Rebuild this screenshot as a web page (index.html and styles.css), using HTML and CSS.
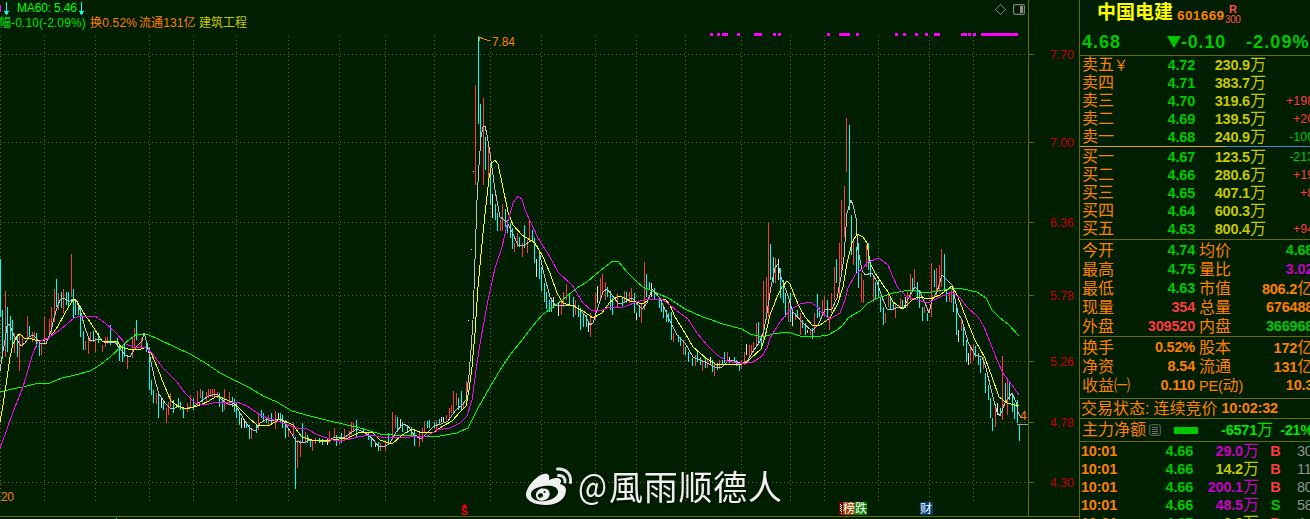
FILE: index.html
```html
<!DOCTYPE html>
<html lang="zh-CN">
<head>
    <meta charset="UTF-8">
    <meta name="viewport" content="width=device-width, initial-scale=1.0">
    <title>中国电建 601669</title>
    <link rel="stylesheet" href="styles.css">
</head>
<body>
    <div class="terminal">
        <main class="chart">
            <div class="chart-info">
                <div class="info-row ma-row">
                    <i class="ma-tail"></i>
                    <svg class="arrow" viewBox="0 0 5 13"><path d="M2 0h1v9h2v1H4v2H3v1H2v-1H1v-2H0V9h2z"/></svg>
                    <span class="ma60">MA60: 5.46</span>
                    <svg class="arrow" viewBox="0 0 5 13"><path d="M2 0h1v9h2v1H4v2H3v1H2v-1H1v-2H0V9h2z"/></svg>
                </div>
                <div class="info-row detail-row">
                    <span class="change">幅-0.10(-2.09%)</span>
                    <span class="turnover">换0.52%</span>
                    <span class="float">流通131亿</span>
                    <span class="sector">建筑工程</span>
                </div>
            </div>

            <svg class="plot" viewBox="0 0 1079 519" width="1079" height="519">
                <!-- grid -->
                <path class="grid" d="M0 54.5H1028M0 142.5H1028M0 222.5H1028M0 295.5H1028M0 361.5H1028M0 422.5H1028M0 482.5H1028"/>
                <path class="grid" d="M.5 36V501M44.5 36V501M95.5 36V501M149.5 36V501M193.5 36V501M236.5 36V501M288.5 36V501M339.5 36V501M385.5 36V501M434.5 36V501M490.5 36V501M541.5 36V501M595.5 36V501M636.5 36V501M685.5 36V501M741.5 36V501M790.5 36V501M824.5 36V501M878.5 36V501M929.5 36V501M973.5 36V501"/>
                <path class="axis" d="M1028.5 0V516M0 516.5H1079M1029 54.5h5M1029 142.5h5M1029 222.5h5M1029 295.5h5M1029 361.5h5M1029 422.5h5M1029 482.5h5"/>

                <!-- signal strip -->
                <path class="strip" d="M710 34.5h3M717 34.5h3M722 34.5h6M737 34.5h3M754 34.5h8M773 34.5h3M778 34.5h3M827 34.5h3M839 34.5h11M856 34.5h3M895 34.5h3M903 34.5h3M915 34.5h3M925 34.5h3M934 34.5h6M961 34.5h6M968 34.5h3M973 34.5h3M981 34.5h37"/>

                <!-- candles -->
                <g transform="translate(.5 0)">
                    <path class="up" d="M5 291V357M14 333V353M19 333V371M22 335V347M27 316V340M32 332V342M34 332V339M41 343V355M44 316V345M49 319V337M51 307V333M54 289V322M58 293V310M63 289V313M71 254V297M85 341V350M88 339V354M90 332V342M95 338V352M102 345V352M105 337V347M107 337V344M127 355V369M132 337V358M134 328V347M141 338V347M156 393V404M166 408V423M168 402V415M170 393V407M187 403V412M190 395V407M197 391V405M200 389V398M206 392V402M208 389V398M210 389V397M212 389V397M214 389V397M217 392V398M224 389V410M229 392V405M251 428V439M258 413V430M268 415V425M275 411V429M288 428V437M293 423V437M297 440V468M300 440V457M305 432V443M312 440V451M315 438V444M329 431V443M334 428V438M339 440V445M344 429V440M349 431V440M351 422V435M353 423V432M380 443V451M385 441V451M392 412V440M395 415V428M419 433V447M422 428V442M424 421V432M436 420V432M446 415V420M449 408V418M451 405V413M453 391V412M456 393V405M463 402V408M466 381V405"/>
                    <path class="up" d="M475 85V185M483 98V185M488 145V181M500 220V231M502 204V231M514 243V252M517 233V247M522 243V257M527 240V253M529 221V242M561 302V315M563 292V307M566 284V300M575 300V315M590 313V337M595 293V320M600 278V300M602 274V292M605 282V300M617 293V307M624 291V303M629 292V303M631 288V302M641 303V323M644 262V310M673 333V342M683 340V355M695 355V366M702 360V371M707 358V368M714 362V376M719 360V369M727 352V362M741 360V369M744 352V365M749 345V357M751 345V355M753 342V350M756 323V347M763 281V340M766 277V320M768 223V317M775 258V283M788 302V322M795 313V320M800 313V335M810 330V335M814 313V333M822 300V313M824 297V317M829 317V330M831 293V313M834 267V300M839 243V297M841 200V277M844 186V237M846 118V172M853 238V265M861 273V302M863 280V303M866 245V267M873 277V302M885 313V323M888 292V307M895 303V318M900 298V308M907 292V307M910 274V300M914 269V287M924 307V313M931 263V317M936 268V295M939 265V293M941 249V287M949 292V302M951 290V303M961 320V331M970 345V364M973 345V360M983 357V369M995 405V427M1002 356V420M1007 378V415"/>
                    <path class="down" d="M0 259V317M2 310V359M7 307V352M10 316V340M12 320V345M17 334V357M29 326V337M36 333V347M39 343V356M56 279V307M61 292V308M66 292V305M68 292V307M73 289V318M75 300V315M78 307V315M80 308V337M83 331V350M93 331V342M98 333V343M110 325V345M117 338V347M119 345V361M122 345V362M124 343V357M136 320V340M146 342V352M149 347V390M151 380V395M153 390V403M158 393V418M163 400V410M173 400V413M178 398V408M180 402V410M183 407V418M193 398V410M202 391V402M219 393V407M222 397V412M232 397V407M234 399V412M236 402V418M239 413V425M246 422V428M249 425V439M256 425V433M261 410V418M263 413V422M266 417V423M271 413V423M280 413V422M282 415V428M285 420V438M295 437V489M302 423V442M307 435V443M310 440V447M319 438V443M322 439V445M336 435V446M341 433V443M356 420V437M363 428V433M368 432V440M371 437V447M378 442V451M388 433V445M397 417V432M402 422V432M407 425V433M411 427V435M414 430V446M427 421V428M429 420V428M434 422V428M439 419V425M458 398V410M461 391V410"/>
                    <path class="down" d="M478 36V124M480 104V147M485 137V170M490 163V205M495 204V220M497 213V231M505 209V227M507 220V233M510 223V238M512 228V249M519 237V247M524 225V248M532 230V240M534 238V263M539 250V279M541 267V291M544 283V302M546 292V309M549 300V312M551 300V312M569 293V305M573 297V317M578 305V317M580 308V330M583 313V327M586 315V327M607 287V297M610 291V310M612 298V315M622 297V306M626 292V303M634 293V313M639 305V317M646 274V297M649 282V290M654 288V300M659 298V308M661 300V312M663 307V318M666 310V322M668 313V322M671 312V340M678 335V342M680 337V346M685 347V355M688 352V362M692 358V366M697 352V362M700 357V365M705 358V368M712 360V372M717 363V370M722 360V365M724 352V363M734 357V363M736 360V366M739 363V371M758 322V345M761 338V348M770 244V280M773 257V283M780 268V298M783 280V303M785 293V317M790 293V322M797 310V318M802 320V328M805 323V335M812 328V339M817 294V318M819 307V317M827 300V318M836 259V283M849 125V210M851 215V255M856 247V273M858 243V288M868 243V270M870 260V277M875 282V300M878 280V298M880 297V312M883 307V325M890 297V310M893 303V310M902 300V309M912 278V292M917 282V300M919 290V308M922 307V321M927 313V321M934 270V287M944 254V292M946 290V302M953 287V312M956 307V335M963 327V346M966 340V362M975 346V357M978 353V365M980 358V373M985 373V393M988 385V400M990 398V418M992 418V431M1000 408V415M1005 383V403M1009 383V400M1012 393V412M1014 403V419M1017 400V423M1019 425V441"/>
                    <path class="flat" d="M161 398V408M241 418V428M244 420V428M278 413V420M327 439V445M375 442V447M400 419V427M441 417V422M443 417V422M468 320v1M471 249v1M473 171v1M492 194V218M536 259V277M553 297V308M558 303V316M588 322V332M597 286V303M636 313V320M651 283V297M710 357V365M729 357V363M746 344V355M778 259V280M792 310V326M807 330V333M905 297V308M958 330V342M968 353V365M997 403V415"/>
                </g>

                <!-- moving averages -->
                <polyline class="ma ma-green" points="0,392 12,389 23,387 35,384 50,383 62,378 75,375 90,371 100,365 110,357 122,346 130,339 137,334 147,334 160,340 175,347 192,355 207,364 220,373 236,381 250,388 263,396 277,402 292,411 310,416 330,421 360,428 380,434 393,435 417,436 440,436 457,433 468,428 473,418 478,408 490,387 500,370 510,355 523,339 532,327 542,315 557,304 577,288 587,282 595,275 610,263 613,261 618,261 627,272 637,282 643,287 657,293 670,299 685,309 703,317 723,324 742,329 750,334 763,337 773,334 788,332 800,336 815,337 828,335 837,330 843,325 848,318 860,311 868,303 878,298 893,293 910,290 927,293 943,290 955,288 963,289 977,292 986,298 992,310 1000,318 1008,324 1019,336"/>
                <polyline class="ma ma-white" points="0,371 2,357 5,340 7,326 9,324 11,328 14,336 18,341 21,346 25,343 29,337 33,335 36,338 40,343 46,344 51,331 54,318 57,308 60,300 64,298 69,302 73,299 77,302 81,313 85,328 90,341 95,340 99,339 104,342 115,342 121,350 125,355 130,357 134,350 138,345 142,341 144,333 147,343 151,362 155,380 159,394 165,403 170,408 174,409 178,406 184,409 193,407 200,402 207,397 214,394 218,395 222,400 228,404 236,406 243,418 249,427 254,431 256,430 260,423 267,419 271,421 279,419 284,422 290,431 296,441 303,443 311,440 320,441 328,442 334,437 345,437 352,432 357,429 365,433 372,438 378,446 384,447 390,443 396,432 403,424 408,426 414,435 421,439 428,432 434,426 441,424 448,421 455,411 463,404 466,400 469,375 471,350 473,320 475,260 477,200 479,165 481,137 483,127 485,126 487,135 490,153 495,190 500,217 507,222 512,232 518,245 523,246 532,240 539,250 543,270 550,297 555,305 567,305 573,305 580,310 585,315 590,325 593,323 598,307 603,292 607,289 612,295 618,303 623,303 632,298 640,307 642,309 647,303 651,292 652,289 660,298 668,317 677,335 685,343 693,357 707,363 715,367 722,367 728,361 733,360 742,364 747,362 752,353 760,341 764,330 767,313 771,287 775,268 778,264 781,277 787,293 793,312 802,322 812,331 818,325 825,310 832,309 837,298 841,277 844,257 847,213 851,200 853,205 856,218 858,250 862,270 865,275 872,273 877,282 882,297 887,309 892,310 898,307 903,309 910,295 915,287 920,292 925,303 929,313 932,300 937,292 942,275 952,285 958,313 962,320 968,342 975,355 982,357 986,368 992,393 997,412 1000,416 1005,403 1012,393 1016,402 1018,412 1021,418"/>
                <polyline class="ma ma-yellow" points="0,422 3,405 7,378 10,357 13,344 17,336 20,334 24,338 29,338 35,340 45,340 51,336 58,326 65,313 71,303 74,299 77,301 83,312 90,322 97,333 102,341 117,341 121,347 131,350 141,349 146,347 151,353 158,369 164,385 171,401 178,406 187,409 197,406 207,402 217,396 224,399 232,402 240,409 249,418 257,425 270,425 280,419 293,425 302,437 315,441 330,440 348,438 360,432 372,432 380,440 392,444 402,435 412,429 422,433 434,432 443,426 452,421 460,412 466,406 469,390 472,367 475,333 478,287 483,233 489,178 492,163 495,160 498,164 502,183 508,212 513,225 522,235 535,243 543,257 550,273 557,293 563,303 573,306 583,311 593,318 602,313 610,302 617,297 620,296 630,301 643,304 648,300 665,299 670,305 675,317 685,333 693,347 707,359 717,365 742,364 750,359 761,349 765,337 770,315 777,297 782,287 787,281 790,284 795,297 800,308 805,317 813,326 820,325 830,318 838,303 843,287 847,263 852,243 857,234 863,237 867,243 870,263 875,273 883,285 888,292 893,302 903,309 912,300 918,297 930,299 940,295 952,286 958,297 968,323 975,340 985,358 992,377 999,397 1007,403 1019,406"/>
                <polyline class="ma ma-magenta" points="0,448 6,432 13,412 23,387 33,353 38,342 48,338 60,330 74,318 80,316 95,316 105,323 115,332 126,344 133,347 145,347 152,353 163,368 177,382 186,394 195,403 205,405 217,402 237,402 247,406 262,416 280,422 297,428 307,429 318,435 333,440 345,440 358,437 370,435 387,438 410,437 427,436 437,430 450,428 460,423 467,416 472,400 477,363 481,338 488,300 495,268 502,247 507,225 513,203 518,196 522,199 525,210 538,238 550,257 558,272 572,285 583,303 592,311 602,310 610,307 623,307 640,301 650,299 663,300 670,305 677,311 688,319 697,333 707,345 717,355 727,361 742,364 753,362 762,356 767,348 770,338 780,322 790,310 800,304 810,302 815,305 822,313 830,319 840,313 845,300 848,288 855,275 863,268 868,262 879,258 888,265 893,277 898,288 907,297 918,300 928,303 940,297 952,292 960,298 967,307 978,317 984,327 990,342 997,360 1003,373 1012,385 1019,395"/>

                <path class="last" d="M1017 424.500h11"/>
                <text class="note" x="1020" y="420">4</text>
                <path class="note-line" d="M490 41L479 37.500M479 37.500h3M479 37.500v3"/>
                <text class="note" x="492" y="46" textLength="23">7.84</text>
                <text class="note" x="1" y="501" textLength="13">20</text>

                <g class="scale">
                    <text x="1050" y="59" textLength="24">7.70</text>
                    <text x="1050" y="147" textLength="24">7.00</text>
                    <text x="1050" y="227" textLength="24">6.36</text>
                    <text x="1050" y="300" textLength="24">5.78</text>
                    <text x="1050" y="366" textLength="24">5.26</text>
                    <text x="1050" y="427" textLength="24">4.78</text>
                    <text x="1050" y="487" textLength="24">4.30</text>
                </g>

                <!-- toolbar icons -->
                <path class="tool" d="M1000.500 4.500l5 5-5 5-5-5z"/>
                <rect class="tool tool-box" x="1013.600" y="4.600" width="10.800" height="9.800" rx="1.500"/>
                <path class="tool-fill" d="M1020 6h3v7h-3z"/>

                <!-- event markers -->
                <path class="sell" d="M462 507l2.500-3 2.500 3z"/>
                <text class="sell-text" x="461" y="515">S</text>
                <path fill="#800000" d="M839 502h5v13h-5z"/>
                <path class="tag-dots" d="M840.500 504v8M841.500 505v9"/>
                <path fill="#904000" d="M843 502h12v13h-12z"/>
                <path fill="#008000" d="M855 502h11l1 1v12h-12z"/>
                <path fill="#003c78" d="M920 502h12l1 1v12h-13z"/>
                <g class="tag">
                    <text x="843" y="513">榜</text>
                    <text x="855" y="513">跌</text>
                    <text x="920" y="513">财</text>
                </g>
                <path fill="#00ffff" d="M116 518h1v1h-1z"/>

                <!-- watermark -->
                <g class="watermark">
                    <path fill-rule="evenodd" d="M526 495c0-8 11-20 18-21 4-1 6 1 5 6 4-2 9-3 11-1s1 3 0 5c4 1 6 3 6 6 0 9-9 15-20 15-11 0-20-4-20-10zM531 495c1 5 7 7 14 6s14-5 13-10-7-6-14-5-14 4-13 9z"/>
                    <path fill-rule="evenodd" d="M549.500 492.500c1 4-2 7-6 8s-7-1-7.500-4.500 2-7 6-7.500 7 1 7.500 4zM543 495.500c0-2-1-2.500-2.800-2.200s-2.500 1.800-2.200 3 1.500 1.700 3 1.400 2-1.200 2-2.200zM545.500 492a1 1 0 1 0-2 0 1 1 0 0 0 2 0z"/>
                    <path class="wave" d="M557.500 469c8-1 14 5 13 13.500M558.500 475.500c4-.5 7 2.500 6.500 6.500"/>
                    <text x="578" y="499" textLength="29" lengthAdjust="spacingAndGlyphs">@</text>
                    <text x="609" y="500" textLength="173">風雨顺德人</text>
                </g>
            </svg>
        </main>

        <aside class="quote">
            <div class="title">
                <h1>中国电建</h1>
                <span class="code">601669</span>
                <span class="flags"><b>R</b><small>300</small></span>
            </div>
            <div class="price">
                <span>4.68</span>
                <span class="diff"><svg viewBox="0 0 14 12"><path d="M0 0h14L7 12z"/></svg>-0.10</span>
                <span class="pct">-2.09%</span>
            </div>

            <div class="book sells">
                <div class="level"><span>卖五<i class="yen">￥</i></span><b>4.72</b><b class="vol">230.9<i>万</i></b><em></em></div>
                <div class="level"><span>卖四</span><b>4.71</b><b class="vol">383.7<i>万</i></b><em></em></div>
                <div class="level"><span>卖三</span><b>4.70</b><b class="vol">319.6<i>万</i></b><em>+198</em></div>
                <div class="level"><span>卖二</span><b>4.69</b><b class="vol">139.5<i>万</i></b><em>+20</em></div>
                <div class="level"><span>卖一</span><b>4.68</b><b class="vol">240.9<i>万</i></b><em class="green">-100</em></div>
            </div>
            <div class="balance"></div>
            <div class="book buys">
                <div class="level"><span>买一</span><b>4.67</b><b class="vol">123.5<i>万</i></b><em class="green">-213</em></div>
                <div class="level"><span>买二</span><b>4.66</b><b class="vol">280.6<i>万</i></b><em>+19</em></div>
                <div class="level"><span>买三</span><b>4.65</b><b class="vol">407.1<i>万</i></b><em>+8</em></div>
                <div class="level"><span>买四</span><b>4.64</b><b class="vol">600.3<i>万</i></b><em></em></div>
                <div class="level"><span>买五</span><b>4.63</b><b class="vol">800.4<i>万</i></b><em>+94</em></div>
            </div>

            <div class="stats">
                <div class="stat"><span>今开</span><b class="green">4.74</b><span>均价</span><b class="green">4.68</b></div>
                <div class="stat"><span>最高</span><b class="green">4.75</b><span>量比</span><b class="purple">3.02</b></div>
                <div class="stat"><span>最低</span><b class="green">4.63</b><span>市值</span><b>806.2<i>亿</i></b></div>
                <div class="stat"><span>现量</span><b class="red">354</b><span>总量</span><b>676488</b></div>
                <div class="stat"><span>外盘</span><b class="red">309520</b><span>内盘</span><b class="green">366968</b></div>
            </div>
            <div class="stats basics">
                <div class="stat"><span>换手</span><b>0.52%</b><span>股本</span><b>172<i>亿</i></b></div>
                <div class="stat"><span>净资</span><b>8.54</b><span>流通</span><b>131<i>亿</i></b></div>
                <div class="stat"><span>收益㈠</span><b>0.110</b><span class="pe"><b>PE(</b>动<b>)</b></span><b>10.3</b></div>
            </div>

            <div class="status"><span>交易状态:</span><span>连续竞价</span><b>10:02:32</b></div>
            <div class="flow">
                <span>主力净额</span>
                <svg class="list-icon" viewBox="0 0 12 12"><rect x=".75" y=".75" width="10.500" height="10.500" rx="1.500"/><path d="M3 3.500h6M3 5.500h6M3 7.500h6M3 9.500h6"/></svg>
                <i class="bar"></i>
                <b>-6571<i>万</i></b>
                <b class="share">-21%</b>
            </div>

            <div class="ticks">
                <div class="tick"><b>10:01</b><b class="green">4.66</b><b class="purple">29.0<i>万</i></b><b class="red side">B</b><b class="count">30</b></div>
                <div class="tick"><b>10:01</b><b class="green">4.66</b><b class="yellow">14.2<i>万</i></b><b class="red side">B</b><b class="count">11</b></div>
                <div class="tick"><b>10:01</b><b class="green">4.66</b><b class="purple">200.1<i>万</i></b><b class="red side">B</b><b class="count">80</b></div>
                <div class="tick"><b>10:01</b><b class="green">4.66</b><b class="purple">48.5<i>万</i></b><b class="green side">S</b><b class="count">58</b></div>
                <div class="tick"><b>10:01</b><b class="green">4.67</b><b class="yellow">9.8<i>万</i></b><b class="red side">B</b><b class="count">4</b></div>
            </div>
        </aside>
    </div>
</body>
</html>
```
FILE: styles.css
```css
* {
    margin: 0;
    padding: 0;
    box-sizing: border-box;
}

body {
    width: 1310px;
    height: 519px;
    overflow: hidden;
    background: #001e00;
    font-family: "Liberation Sans", "Noto Sans CJK SC", sans-serif;
    font-size: 12px;
}

i, em {
    font-style: normal;
}

.terminal {
    display: flex;
    height: 519px;
    overflow: hidden;
}

.chart {
    position: relative;
    flex: 0 0 1079px;
    height: 519px;
}

/* text lines lie over the plot */
.chart-info {
    position: absolute;
    top: 1px;
    left: 0;
    z-index: 1;
}

.info-row {
    display: flex;
    align-items: center;
    height: 15px;
    line-height: 15px;
    white-space: nowrap;
}

.ma-row {
    line-height: 17px;
}

.ma-tail {
    width: 1px;
    height: 7px;
    background: #ff00ff;
    margin-right: 3px;
}

.arrow {
    width: 5px;
    height: 13px;
    fill: #00ffff;
}

.ma60 {
    color: #00ff00;
    margin: 0 2px 0 8px;
    letter-spacing: -0.15px;
}

.detail-row {
    margin-left: -1px;
}

.change {
    width: 91px;
    color: #00e000;
    letter-spacing: 0.1px;
}

.turnover {
    width: 49px;
    color: #ff8000;
    letter-spacing: 0.2px;
}

.float {
    width: 60px;
    color: #ff8000;
    letter-spacing: 0.1px;
}

.sector {
    color: #c8c800;
}

.plot {
    display: block;
    shape-rendering: crispEdges;
}

.plot path, .plot polyline {
    stroke-width: 1;
}

.grid {
    fill: none;
    stroke: #6e6800;
    stroke-dasharray: 1 3;
}

.axis {
    fill: none;
    stroke: #6e6800;
}

.plot .strip {
    fill: none;
    stroke: #ff00ff;
    stroke-width: 3;
}

.up {
    fill: none;
    stroke: #ff3c3c;
}

.down {
    fill: none;
    stroke: #00ffff;
}

.flat {
    fill: none;
    stroke: #e6e6e6;
}

.ma {
    fill: none;
}

.ma-green {
    stroke: #00ff00;
}

.ma-white {
    stroke: #c0c0c0;
}

.ma-yellow {
    stroke: #ffff00;
}

.ma-magenta {
    stroke: #ff00ff;
}

.last {
    stroke: #a0a0a0;
}

.note {
    fill: #ff8000;
    font-size: 12px;
}

.note-line {
    fill: none;
    stroke: #ff8000;
}

.scale {
    fill: #c80000;
    font-size: 12.5px;
}

.tool {
    fill: none;
    stroke: #808080;
}

.tool-box {
    stroke-width: 1.2;
    shape-rendering: auto;
}

.tool-fill {
    fill: #909090;
}

.sell, .sell-text {
    fill: #ff0000;
}

.sell-text {
    font-size: 10px;
    font-weight: bold;
}

.tag {
    fill: #fff;
    font-size: 12px;
}

.tag-dots {
    stroke: #fff;
    stroke-dasharray: 1 1;
}

.watermark {
    fill: #f0f0f0;
    font-size: 34px;
    shape-rendering: auto;
    filter: drop-shadow(1px 1px 1px rgba(0, 0, 0, 0.6));
}

.watermark text {
    font-family: "Noto Sans CJK SC", sans-serif;
}

.plot .wave {
    fill: none;
    stroke: #e6e6e6;
    stroke-width: 3;
    stroke-linecap: round;
}

/* quote panel, runs past the right edge of the window */
.quote {
    flex: 0 0 232px;
    border-left: 1px solid #6e6800;
    color: #ff8000;
    font-size: 16px;
    white-space: nowrap;
}

.quote b {
    font-size: 14.5px;
    letter-spacing: -0.2px;
}

.quote b i {
    font-size: 16px;
    font-weight: normal;
    letter-spacing: 0;
}

.title {
    display: flex;
    height: 28px;
    padding-left: 17px;
    line-height: 28px;
}

.title h1 {
    width: 80px;
    color: #ffff00;
    font-size: 19px;
    line-height: 26px;
}

.code {
    width: 48px;
    font-size: 13.5px;
    font-weight: bold;
    line-height: 31px;
    letter-spacing: 0.4px;
}

.flags {
    display: flex;
    flex-direction: column;
    align-items: center;
    padding-top: 4px;
    color: #ff5050;
}

.flags b {
    font-size: 11px;
    line-height: 11px;
}

.flags small {
    font-size: 10px;
    line-height: 9px;
    letter-spacing: -0.4px;
}

.price {
    display: flex;
    height: 28px;
    padding-left: 2px;
    border-bottom: 1px solid #6e6800;
    color: #00c800;
    font-size: 18px;
    font-weight: bold;
    line-height: 28px;
    letter-spacing: 1px;
}

.price span:first-child {
    width: 85px;
}

.price .diff {
    width: 79px;
    letter-spacing: 0.8px;
}

.diff svg {
    width: 14px;
    height: 12px;
    fill: #00c800;
}

.price .pct {
    letter-spacing: 1.1px;
}

.level {
    display: grid;
    grid-template-columns: 58px 55px 71px 1fr;
    height: 18px;
    line-height: 18px;
    padding-left: 2px;
    color: #00c800;
}

.level span {
    color: #ff8000;
}

.level b, .level em {
    text-align: right;
}

.level .yen {
    font-size: 14px;
}

.level .vol {
    color: #c8c800;
}

.level em {
    color: #ff3c3c;
    font-size: 12.5px;
    margin-right: -1px;
}

.level .green, .green {
    color: #00c800;
}

.balance {
    height: 1px;
    background: linear-gradient(to right, #e0a040 146px, #4088d0 146px);
}

.buys {
    height: 93px;
    padding-top: 1px;
    border-bottom: 1px solid #6e6800;
}

.stats {
    height: 97px;
    padding-top: 1px;
    border-bottom: 1px solid #6e6800;
}

.basics {
    height: 62px;
}

.stat {
    display: grid;
    grid-template-columns: 48px 65px 48px 1fr;
    height: 19px;
    line-height: 19px;
    padding-left: 2px;
}

.stat > b {
    text-align: right;
}

.stat > span:nth-child(3) {
    padding-left: 4px;
}

.pe b {
    font-weight: normal;
}

.stats .red, .tick .red {
    color: #ff3c3c;
}

.purple {
    color: #c800c8;
}

.yellow {
    color: #c8c800;
}

.status {
    display: flex;
    gap: 4px;
    height: 20px;
    padding-left: 1px;
    border-bottom: 1px solid #6e6800;
    line-height: 19px;
}

.flow {
    display: flex;
    align-items: center;
    height: 23px;
    padding-left: 2px;
    border-bottom: 1px solid #6e6800;
    color: #00e600;
    line-height: 22px;
}

.flow span {
    color: #ff8000;
}

.list-icon {
    width: 12px;
    height: 12px;
    margin: 0 13px 0 3px;
    fill: none;
    stroke: #707070;
}

.bar {
    width: 24px;
    height: 7px;
    margin-right: 23px;
    background: #00c800;
}

.flow .share {
    margin-left: 7px;
}

.tick {
    display: grid;
    grid-template-columns: 60px 52px 66px 27px 1fr;
    height: 18px;
    line-height: 18px;
    padding-left: 1px;
}

.tick b {
    text-align: right;
}

.tick b:first-child {
    text-align: left;
}

.tick .side {
    text-align: center;
    padding-left: 6px;
}

.tick .count {
    color: #909090;
    font-weight: normal;
    text-align: left;
    padding-left: 11px;
}
```
